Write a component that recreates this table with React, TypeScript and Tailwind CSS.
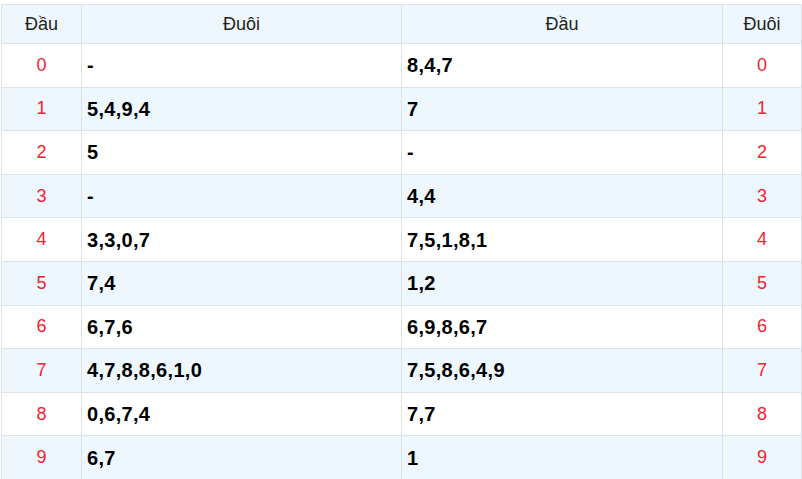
const rows = [
  { n: 0, tail: "-", head: "8,4,7" },
  { n: 1, tail: "5,4,9,4", head: "7" },
  { n: 2, tail: "5", head: "-" },
  { n: 3, tail: "-", head: "4,4" },
  { n: 4, tail: "3,3,0,7", head: "7,5,1,8,1" },
  { n: 5, tail: "7,4", head: "1,2" },
  { n: 6, tail: "6,7,6", head: "6,9,8,6,7" },
  { n: 7, tail: "4,7,8,8,6,1,0", head: "7,5,8,6,4,9" },
  { n: 8, tail: "0,6,7,4", head: "7,7" },
  { n: 9, tail: "6,7", head: "1" },
]

const App = () => {
  return (
    <div className="w-[802px] h-[479px] overflow-hidden bg-white pt-[4px] pl-[1px] font-['Liberation_Sans',Arial,sans-serif]">
      <table className="w-[800px] table-fixed border-collapse text-[#222]">
        <colgroup>
          <col className="w-[80px]" />
          <col className="w-[320px]" />
          <col className="w-[321px]" />
          <col className="w-[79px]" />
        </colgroup>
        <thead>
          <tr className="h-[39px] bg-[#eef6fe] text-[18px]">
            <th className="border border-[#dde2e8] font-normal">Đầu</th>
            <th className="border border-[#dde2e8] font-normal">Đuôi</th>
            <th className="border border-[#dde2e8] font-normal">Đầu</th>
            <th className="border border-[#dde2e8] font-normal">Đuôi</th>
          </tr>
        </thead>
        <tbody>
          {rows.map((r) => (
            <tr key={r.n} className={r.n % 2 === 1 ? "h-[43.6px] bg-[#eef6fe]" : "h-[43.6px] bg-white"}>
              <td className="border border-[#dde2e8] text-center text-[18px] text-[#f5222d]">{r.n}</td>
              <td className="border border-[#dde2e8] px-[5px] text-[20px] font-bold tracking-[0.3px] text-black">{r.tail}</td>
              <td className="border border-[#dde2e8] px-[5px] text-[20px] font-bold tracking-[0.3px] text-black">{r.head}</td>
              <td className="border border-[#dde2e8] text-center text-[18px] text-[#f5222d]">{r.n}</td>
            </tr>
          ))}
        </tbody>
      </table>
    </div>
  )
}

export default App
